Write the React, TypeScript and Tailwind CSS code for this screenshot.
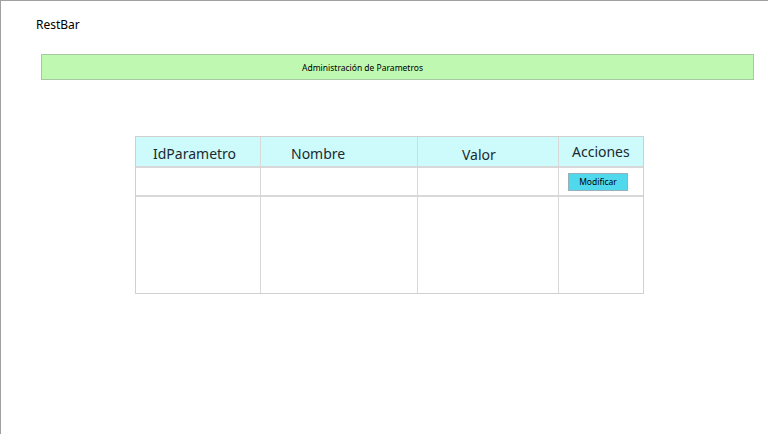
export default function App() {
  return (
    <div className="h-[434px] w-[768px] border-t border-l border-[#a0a0a0] bg-white font-['Noto_Sans',sans-serif] text-black">
      {/* Title */}
      <div className="pl-[35px] pt-[15px] text-[12px] leading-[17px]">RestBar</div>

      {/* Banner */}
      <div className="ml-[40px] mr-[14px] mt-[21px] flex h-[26px] items-center border border-[#a8c8a0] bg-[#bff8b1] pl-[260px] pt-[3px] text-[8.5px]">
        Administración de Parametros
      </div>

      {/* Table */}
      <div className="ml-[134px] mt-[56px] grid w-[509px] grid-cols-[125px_157px_141px_84px] border border-[#d0d0d0]">
        {/* Header */}
        <div className="flex h-[31px] items-center border-b-2 border-r border-[#d8d8d8] bg-[#cdfbfb] pl-[17px] pt-[4px] text-[14px] text-[#1a2a30]">
          IdParametro
        </div>
        <div className="flex h-[31px] items-center border-b-2 border-r border-[#d8d8d8] bg-[#cdfbfb] pl-[30px] pt-[4px] text-[14px] text-[#1a2a30]">
          Nombre
        </div>
        <div className="flex h-[31px] items-center border-b-2 border-r border-[#d8d8d8] bg-[#cdfbfb] pt-[6px] pl-[44px] text-[14px] text-[#1a2a30]">
          Valor
        </div>
        <div className="flex h-[31px] items-center border-b-2 border-[#d8d8d8] bg-[#cdfbfb] pb-[1px] pl-[13px] text-[14px] text-[#1a2a30]">
          Acciones
        </div>

        {/* Row 1 */}
        <div className="h-[29px] border-b-2 border-r border-[#d8d8d8]" />
        <div className="h-[29px] border-b-2 border-r border-[#d8d8d8]" />
        <div className="h-[29px] border-b-2 border-r border-[#d8d8d8]" />
        <div className="h-[29px] border-b-2 border-[#d8d8d8] pl-[9px] pt-[5px]">
          <button className="flex h-[18px] w-[60px] items-center justify-center border border-[#9ab0b8] bg-[#50d8ec] text-[8.5px] leading-none">
            Modificar
          </button>
        </div>

        {/* Row 2 */}
        <div className="h-[96px] border-r border-[#d8d8d8]" />
        <div className="h-[96px] border-r border-[#d8d8d8]" />
        <div className="h-[96px] border-r border-[#d8d8d8]" />
        <div className="h-[96px]" />
      </div>
    </div>
  );
}
